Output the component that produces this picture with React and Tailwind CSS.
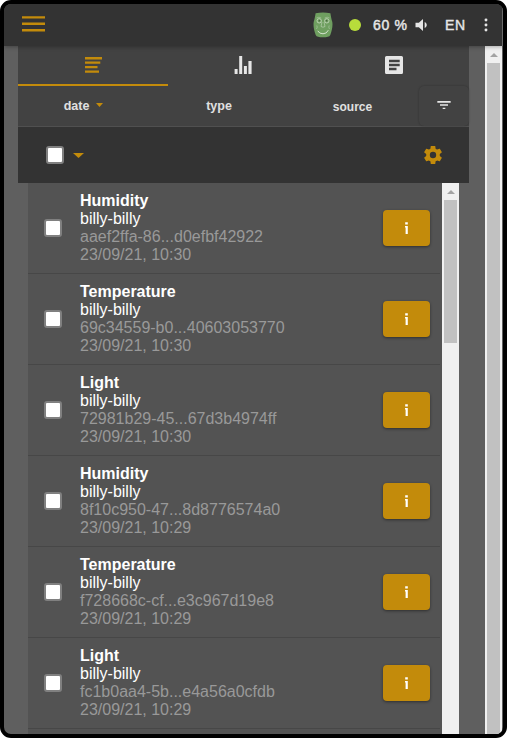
const ROWS = [
  ["Humidity", "aaef2ffa-86...d0efbf42922", "23/09/21, 10:30"],
  ["Temperature", "69c34559-b0...40603053770", "23/09/21, 10:30"],
  ["Light", "72981b29-45...67d3b4974ff", "23/09/21, 10:30"],
  ["Humidity", "8f10c950-47...8d8776574a0", "23/09/21, 10:29"],
  ["Temperature", "f728668c-cf...e3c967d19e8", "23/09/21, 10:29"],
  ["Light", "fc1b0aa4-5b...e4a56a0cfdb", "23/09/21, 10:29"],
];

function Checkbox() {
  return <span className="block size-[18px] shrink-0 rounded-[3px] border-2 border-[#808080] bg-white" />;
}

function ScrollArrow() {
  return (
    <div className="flex h-[17px] shrink-0 items-center justify-center">
      <svg width="8" height="4" viewBox="0 0 8 4" fill="#a3a3a3"><path d="M0 4 4 0l4 4z" /></svg>
    </div>
  );
}

function Caret({ className, width, height }) {
  return (
    <svg className={className} width={width} height={height} viewBox="0 0 10 5" preserveAspectRatio="none" fill="#c38b0b">
      <path d="M0 0h10L5 5z" />
    </svg>
  );
}

function Mascot() {
  return (
    <svg width="20" height="26" viewBox="0 0 20 26">
      <path d="M2.600 1.200Q10-.4 17.400 1.200c.5 2.800.9 5.800 1.900 8.800.6 4-.3 8.500-2 13-.8 1.900-3.300 2.300-7.300 2.300s-6.500-.4-7.300-2.300C1 18.500.1 14 .7 10c1-3 1.400-6 1.900-8.800z" fill="#6f9f60" />
      <g fill="none" stroke="#d5e2cf">
        <circle cx="6.200" cy="8.800" r="2.200" strokeWidth=".7" />
        <circle cx="13.800" cy="8.800" r="2.200" strokeWidth=".7" />
        <path d="M3.500 6Q6 4.400 8.300 6M11.700 6q2.500-1.600 4.800 0" strokeWidth=".4" />
        <path d="M9 10l-1 4.500q2 1.500 4 0L11 10" strokeWidth=".5" />
        <path d="M4.700 18.800q1.600 3 5.300 3t5.300-3.600" strokeWidth="1" />
        <path d="M3.800 13.500q1 1.500-.3 3.500M16.200 13.500q-1 1.500.3 3.500" strokeWidth=".4" />
      </g>
      <circle cx="6.400" cy="8.800" r=".8" fill="#4a6242" />
      <circle cx="13.600" cy="8.800" r=".8" fill="#4a6242" />
    </svg>
  );
}

function Header() {
  return (
    <header className="relative z-10 flex h-[42px] shrink-0 items-center border-r border-[#6b6b6b] bg-[#333] pl-[18px] text-[#e6e6e6] shadow-[0_1px_4px_rgba(0,0,0,0.3)]">
      <svg className="mb-[2px]" width="23" height="16" viewBox="0 0 23 16" fill="#c38b0b">
        <path d="M0 .2h23v2.400H0zM0 6.600h23V9H0zM0 13h23v2.400H0z" />
      </svg>
      <div className="ml-[268px] w-5"><Mascot /></div>
      <span className="ml-4 size-3 rounded-full bg-[#b8dd3b]" />
      <span className="ml-[12px] w-[36px] whitespace-nowrap font-['Liberation_Sans',sans-serif] text-[14px] font-medium tracking-[0.7px] [-webkit-text-stroke:0.45px_#e6e6e6]">60 %</span>
      <svg className="ml-[4px]" width="20" height="18" viewBox="0 0 24 24" preserveAspectRatio="none" fill="#e6e6e6">
        <path d="M3 9v6h4l5 5V4L7 9H3zm13.500 3c0-1.770-1.020-3.290-2.500-4.030v8.050c1.480-.73 2.500-2.250 2.500-4.020z" />
      </svg>
      <span className="ml-[12px] w-[22px] font-['Liberation_Sans',sans-serif] text-[14px] tracking-[0.7px] [-webkit-text-stroke:0.4px_#e6e6e6]">EN</span>
      <svg className="ml-[11px]" width="16" height="16" viewBox="0 0 24 24" fill="#e6e6e6">
        <circle cx="12" cy="4.500" r="2.200" /><circle cx="12" cy="12" r="2.200" /><circle cx="12" cy="19.500" r="2.200" />
      </svg>
    </header>
  );
}

function Tabs() {
  return (
    <div className="grid h-10 shrink-0 grid-cols-3 bg-[#424242]">
      <div className="flex items-center justify-center border-b-2 border-[#c38b0b]">
        <svg width="18" height="16" viewBox="0 0 18 16" fill="#c38b0b">
          <path d="M1 0h17v2.400H1zM1 4.500h15.300v2.300H1zM1 9h12.500v2.300H1zM1 13.400h14v2.400H1z" />
        </svg>
      </div>
      <div className="flex items-center justify-center pb-[2px]">
        <svg width="18" height="18" viewBox="0 0 18 18" fill="#e6e6e6">
          <path d="M.6 13h3v5h-3zM5.200 0h3v18h-3zM9.900 10h3v8h-3zM14.400 5h3.200v13h-3.200z" />
        </svg>
      </div>
      <div className="flex items-center justify-center pb-[2px]">
        <svg width="24" height="24" viewBox="0 0 24 24" fill="#e6e6e6">
          <path d="M19.500 3h-15A1.500 1.500 0 0 0 3 4.500v15A1.500 1.500 0 0 0 4.500 21h15a1.500 1.500 0 0 0 1.500-1.500v-15A1.500 1.500 0 0 0 19.500 3zm-5 14.200H7v-2.400h7.500v2.400zm3.200-4H7v-2.400h10.700v2.400zm0-4H7V6.800h10.700v2.400z" />
        </svg>
      </div>
    </div>
  );
}

function SortBar() {
  return (
    <div className="flex h-[41px] shrink-0 border-b border-[#505050] bg-[#424242] font-['Liberation_Sans',sans-serif] text-[12px] font-bold text-[#e0e0e0]">
      <div className="flex w-[134px] items-center justify-center pt-px pr-[3px] text-[12.5px]">
        date<Caret className="mb-[3px] ml-[7px]" width={7} height={4} />
      </div>
      <div className="flex w-[134px] items-center justify-center pt-px text-[12.5px]">type</div>
      <div className="flex w-[133px] items-center justify-center pt-px">source</div>
      <div className="flex h-10 flex-1 items-center justify-center rounded-[5px] pb-[3px] shadow-[0_0_2px_rgba(0,0,0,0.3)]">
        <svg width="16" height="16" viewBox="0 0 24 24" fill="#e6e6e6">
          <path d="M10 18h4v-2h-4v2zM2 6v2.500h20V6H2zm4 7.200h12v-2.200H6v2.200z" />
        </svg>
      </div>
    </div>
  );
}

function Toolbar() {
  return (
    <div className="flex h-14 shrink-0 items-center bg-[#333] pr-[26px] pl-[27.5px]">
      <Checkbox />
      <Caret className="ml-[9.500px]" width={11} height={5} />
      <svg className="ml-auto" width="20" height="22" viewBox="1.250 -.1 21.500 24.200" fill="#c38b0b">
        <path d="M19.430 12.980c.04-.32.070-.64.070-.98s-.03-.66-.07-.98l2.110-1.650c.19-.15.240-.42.120-.64l-2-3.460c-.12-.22-.39-.3-.61-.22l-2.490 1c-.52-.4-1.080-.73-1.690-.98l-.38-2.650C14.460 2.180 14.250 2 14 2h-4c-.25 0-.46.18-.49.420l-.38 2.650c-.61.250-1.170.590-1.690.980l-2.490-1c-.23-.09-.49 0-.61.220l-2 3.460c-.13.220-.07.490.12.640l2.110 1.650c-.04.320-.07.650-.07.980s.03.660.07.980l-2.110 1.650c-.19.150-.24.420-.12.640l2 3.460c.12.220.39.300.61.220l2.490-1c.52.400 1.080.730 1.690.980l.38 2.650c.03.240.24.420.49.420h4c.25 0 .46-.18.490-.42l.38-2.650c.61-.25 1.170-.59 1.690-.98l2.490 1c.23.090.49 0 .61-.22l2-3.460c.12-.22.070-.49-.12-.64l-2.110-1.650zM12 15.500a3.500 3.500 0 1 1 0-7 3.500 3.500 0 0 1 0 7z" />
      </svg>
    </div>
  );
}

function Row({ row }) {
  return (
    <div className="flex h-[91px] shrink-0 items-center border-b border-[#474747] pr-[10px] pl-4">
      <Checkbox />
      <div className="ml-[18px] font-['Liberation_Sans',sans-serif] text-[16px] leading-[18px] text-[#999]">
        <p className="font-bold text-white">{row[0]}</p>
        <p className="text-white">billy-billy</p>
        <p>{row[1]}</p>
        <p>{row[2]}</p>
      </div>
      <button className="ml-auto flex h-9 w-[47px] items-center justify-center rounded-[4px] bg-[#c38b0b] shadow-[0_1px_3px_rgba(0,0,0,0.45)]">
        <svg width="3" height="12" viewBox="0 0 3 12" fill="#fff"><path d="M.2 .2h2.600v2.200H.2zM0 4h2.800v8H.6V5.500H0z" /></svg>
      </button>
    </div>
  );
}

export default function App() {
  return (
    <div className="h-[738px] w-[507px] bg-white">
      <div className="flex h-full flex-col overflow-hidden rounded-[11px] border-4 border-black bg-[#5f5f5f]">
        <Header />
        <div className="flex min-h-0 flex-1">
          <main className="ml-[14px] flex w-[451px] flex-col">
            <Tabs />
            <SortBar />
            <Toolbar />
            <div className="mr-[10px] ml-[10px] flex min-h-0 flex-1 overflow-hidden bg-[#535353]">
              <div className="flex w-[412px] flex-col overflow-hidden">
                {ROWS.map((row, i) => <Row key={i} row={row} />)}
              </div>
              <div className="ml-[2px] w-[17px] bg-[#f0f0f0]">
                <ScrollArrow />
                <div className="mx-[2px] h-[143px] bg-[#c1c1c1]" />
              </div>
            </div>
          </main>
          <div className="ml-4 flex w-[17px] flex-col bg-[#f0f0f0]">
            <ScrollArrow />
            <div className="mx-[2px] flex-1 bg-[#c1c1c1]" />
          </div>
        </div>
      </div>
    </div>
  );
}
